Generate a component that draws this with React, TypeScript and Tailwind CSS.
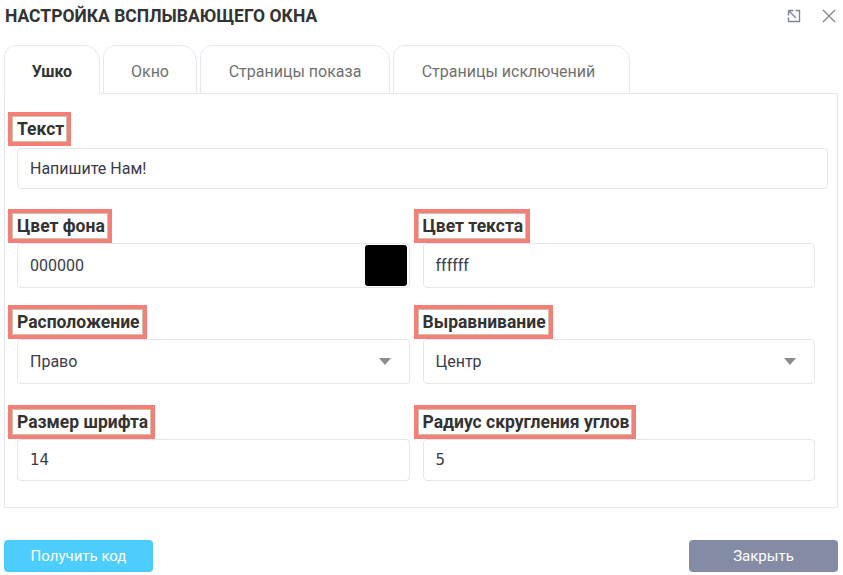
const Label = ({ text }: { text: string }) => (
  <div className="-ml-[9px] self-start border-4 border-[#f47f79] bg-white pl-[5px] pr-[3px] text-[17.5px] leading-[26px] font-bold text-[#333] shadow-[inset_0_0_0_1px_#d2bfa8]">
    {text}
  </div>
);

const Field = ({
  children,
  h,
  className = "",
}: {
  children: React.ReactNode;
  h: string;
  className?: string;
}) => (
  <div
    className={`flex items-center rounded-[4px] border border-[#e4e6ee] bg-white pl-[12px] pr-[2px] text-[#3b3b4b] ${h} ${className}`}
  >
    {children}
  </div>
);

const Arrow = () => (
  <svg width="12" height="7" viewBox="0 0 12 7" className="mr-[16px] ml-auto">
    <path d="M0 0h12L6 7z" fill="#8c8c8c" />
  </svg>
);

const App = () => {
  return (
    <div className="w-[843px] h-[575px] bg-white pl-[4px] pr-[5px] font-['Roboto',sans-serif]">
      <div className="flex h-[32px] items-center justify-between">
        <h1 className="pl-[1px] text-[17.5px] font-bold text-[#333]">
          НАСТРОЙКА ВСПЛЫВАЮЩЕГО ОКНА
        </h1>
        <div className="flex items-center gap-[21px] pr-[2px]">
          <svg width="14" height="14" viewBox="0 0 14 14" fill="none" stroke="#7f8595" strokeWidth="1.4">
            <path d="M1.5 1.5h5M1.5 1.5v5M1.5 1.5l7.5 7.5" />
            <path d="M8.5 1.5h4v11h-11v-4" />
          </svg>
          <svg width="14" height="14" viewBox="0 0 14 14" fill="none" stroke="#858585" strokeWidth="1.3">
            <path d="M1 1l12 12M13 1L1 13" />
          </svg>
        </div>
      </div>

      <div className="relative z-10 mt-[13px] -mb-px flex gap-[3px] text-[16px]">
        <div className="flex h-[49px] w-[96px] items-center justify-center rounded-tl-[12px] rounded-tr-[16px] border border-[#e6e9ef] border-b-white bg-white pt-[4px] font-bold text-[#333]">
          Ушко
        </div>
        <div className="flex h-[49px] w-[94px] items-center justify-center rounded-tl-[12px] rounded-tr-[16px] border border-[#e6e9ef] bg-white pt-[4px] text-[#6f6f6f]">
          Окно
        </div>
        <div className="flex h-[49px] w-[190px] items-center justify-center rounded-tl-[12px] rounded-tr-[16px] border border-[#e6e9ef] bg-white pt-[4px] text-[#6f6f6f]">
          Страницы показа
        </div>
        <div className="flex h-[49px] w-[237px] items-center justify-center rounded-tl-[12px] rounded-tr-[16px] border border-[#e6e9ef] bg-white pt-[4px] pr-[6px] text-[#6f6f6f]">
          Страницы исключений
        </div>
      </div>

      <div className="h-[415px] border border-[#e6e8ee] pl-[12px] pt-[18px] text-[16px]">
        <div className="flex flex-col">
          <Label text="Текст" />
          <Field h="h-[41px]" className="mt-[2px] w-[811px]">
            Напишите Нам!
          </Field>
        </div>

        <div className="mt-[20px] grid w-[798px] grid-cols-2 gap-x-[13px]">
          <div className="flex flex-col">
            <Label text="Цвет фона" />
            <Field h="h-[45px]">
              000000
              <div className="ml-auto h-[41px] w-[42px] rounded-[3px] bg-black" />
            </Field>
          </div>
          <div className="flex flex-col">
            <Label text="Цвет текста" />
            <Field h="h-[45px]">ffffff</Field>
          </div>
        </div>

        <div className="mt-[17px] grid w-[798px] grid-cols-2 gap-x-[13px]">
          <div className="flex flex-col">
            <Label text="Расположение" />
            <Field h="h-[45px]">
              Право
              <Arrow />
            </Field>
          </div>
          <div className="flex flex-col">
            <Label text="Выравнивание" />
            <Field h="h-[45px]">
              Центр
              <Arrow />
            </Field>
          </div>
        </div>

        <div className="mt-[21px] grid w-[798px] grid-cols-2 gap-x-[13px]">
          <div className="flex flex-col">
            <Label text="Размер шрифта" />
            <Field h="h-[42px]" className="font-['DejaVu_Sans',sans-serif] text-[15px] text-[#2f3340]">
              14
            </Field>
          </div>
          <div className="flex flex-col">
            <Label text="Радиус скругления углов" />
            <Field h="h-[42px]" className="font-['DejaVu_Sans',sans-serif] text-[15px] text-[#2f3340]">
              5
            </Field>
          </div>
        </div>
      </div>

      <div className="mt-[32px] flex justify-between">
        <button className="h-[32px] w-[149px] rounded-[4px] bg-[#4ccdfd] text-[15px] text-white">
          Получить код
        </button>
        <button className="h-[32px] w-[149px] rounded-[4px] bg-[#848ca5] text-[15px] text-white">
          Закрыть
        </button>
      </div>
    </div>
  );
};

export default App;
